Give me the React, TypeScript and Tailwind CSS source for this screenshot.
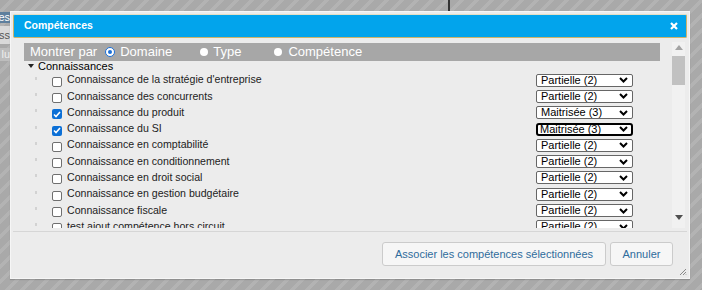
import React from "react";

type Row = { label: string; val: string; checked: boolean; focus?: boolean };

const rows: Row[] = [
  { label: "Connaissance de la stratégie d'entreprise", val: "Partielle (2)", checked: false },
  { label: "Connaissance des concurrents", val: "Partielle (2)", checked: false },
  { label: "Connaissance du produit", val: "Maitrisée (3)", checked: true },
  { label: "Connaissance du SI", val: "Maitrisée (3)", checked: true, focus: true },
  { label: "Connaissance en comptabilité", val: "Partielle (2)", checked: false },
  { label: "Connaissance en conditionnement", val: "Partielle (2)", checked: false },
  { label: "Connaissance en droit social", val: "Partielle (2)", checked: false },
  { label: "Connaissance en gestion budgétaire", val: "Partielle (2)", checked: false },
  { label: "Connaissance fiscale", val: "Partielle (2)", checked: false },
  { label: "test ajout compétence hors circuit", val: "Partielle (2)", checked: false },
];

function Chevron() {
  return (
    <svg width="9" height="6" viewBox="0 0 9 6">
      <polyline points="1,1 4.5,4.5 8,1" fill="none" stroke="#000" strokeWidth="2" />
    </svg>
  );
}

function Checkbox({ checked }: { checked: boolean }) {
  if (checked) {
    return (
      <div className="w-[10px] h-[10px] rounded-[2px] bg-[#0b6fd6] flex items-center justify-center">
        <svg width="8" height="7" viewBox="0 0 8 7">
          <polyline points="1,3.5 3,5.5 7,1" fill="none" stroke="#fff" strokeWidth="1.6" />
        </svg>
      </div>
    );
  }
  return <div className="w-[10px] h-[10px] rounded-[2px] bg-white border border-[#6f6f6f]" />;
}

export default function App() {
  return (
    <div className="relative w-[702px] h-[290px] overflow-hidden bg-[repeating-linear-gradient(135deg,#a9a9a9_0px,#a9a9a9_7px,#b3b3b3_7px,#b3b3b3_10.6px)] font-['Liberation_Sans',Arial,sans-serif]">
      {/* background page fragments */}
      <div className="absolute left-0 top-[12px] w-[10px] h-[11px] bg-[#5e7f9d] overflow-hidden flex justify-end">
        <span className="text-[11px] leading-[11px] text-white whitespace-nowrap">Classes</span>
      </div>
      <div className="absolute left-0 top-[26px] w-[10px] h-[18px] bg-[#d9d9d9] overflow-hidden flex justify-end items-center">
        <span className="text-[11px] leading-[11px] text-[#555] whitespace-nowrap">Class</span>
      </div>
      <div className="absolute left-0 top-[48px] w-[10px] h-[13px] bg-[#bdbdbd] overflow-hidden flex justify-end items-center">
        <span className="text-[11px] leading-[11px] text-[#eee] whitespace-nowrap">lu</span>
      </div>
      <div className="absolute left-[448px] top-0 w-[2px] h-[11px] bg-[#333]" />

      {/* dialog */}
      <div className="absolute left-[10px] top-[11px] w-[680px] h-[268px] bg-[#ececec] border border-[#f6f6f6] shadow-[0_1px_1px_rgba(0,0,0,0.15)] p-[2px] flex flex-col">
        {/* title bar */}
        <div className="h-[24px] bg-[#02a4ec] border border-[#cdb46a] border-t-[#e4dfc4] rounded-[2px] flex items-center justify-between pl-[10px] pr-[8px]">
          <span className="text-white text-[10.5px] font-bold">Compétences</span>
          <svg width="8" height="8" viewBox="0 0 8 8">
            <path d="M1 1 L7 7 M7 1 L1 7" stroke="#fff" strokeWidth="2.2" />
          </svg>
        </div>

        {/* body */}
        <div className="flex mt-[4px] ml-[11px] h-[186px]">
          <div className="w-[636px] overflow-hidden pt-[1px]">
            <div className="h-[18px] bg-[#a7a7a7] flex items-center text-white text-[13px] pl-[6px]">
              <span>Montrer par</span>
              <div className="ml-[8px] w-[10px] h-[10px] rounded-full border-[1.5px] border-[#1a6fd8] bg-white flex items-center justify-center">
                <div className="w-[4px] h-[4px] rounded-full bg-[#1a6fd8]" />
              </div>
              <span className="ml-[5px]">Domaine</span>
              <div className="ml-[28px] w-[8px] h-[8px] rounded-full bg-white" />
              <span className="ml-[5px]">Type</span>
              <div className="ml-[33px] w-[8px] h-[8px] rounded-full bg-white" />
              <span className="ml-[6px]">Compétence</span>
            </div>
            <div className="h-[11px] flex items-center text-[11px] text-black">
              <svg className="ml-[4px]" width="6" height="5" viewBox="0 0 6 5">
                <polygon points="0,0 6,0 3,4" fill="#222" />
              </svg>
              <span className="ml-[4px] leading-[11px]">Connaissances</span>
            </div>
            {rows.map((r, i) => (
              <div key={i} className="h-[16.3px] flex items-center text-[10.6px] text-[#222]">
                <div className="ml-[11px] w-[2px] h-[3px] bg-[#d2d2d2] -mt-[4px]" />
                <div className="ml-[15px] mt-[3px]">
                  <Checkbox checked={r.checked} />
                </div>
                <span className="ml-[5px] w-[469px] whitespace-nowrap">{r.label}</span>
                <div
                  className={
                    r.focus
                      ? "w-[97px] h-[13px] bg-white border-2 border-black rounded-[3px] flex items-center justify-between pl-[2px] pr-[3px] text-[11px] text-black"
                      : "w-[97px] h-[13px] bg-white border border-[#666] rounded-[2px] flex items-center justify-between pl-[4px] pr-[4px] text-[11px] text-black"
                  }
                >
                  <span className="leading-[11px]">{r.val}</span>
                  <Chevron />
                </div>
              </div>
            ))}
          </div>
          {/* scrollbar */}
          <div className="ml-[12px] w-[13px] flex flex-col items-center bg-[#f1f1f1]">
            <svg className="mt-[3px]" width="8" height="5" viewBox="0 0 8 5">
              <polygon points="0,5 8,5 4,0" fill="#a3a3a3" />
            </svg>
            <div className="mt-[6px] w-[13px] h-[29px] bg-[#c1c1c1]" />
            <div className="flex-1" />
            <svg className="mb-[8px]" width="8" height="5" viewBox="0 0 8 5">
              <polygon points="0,0 8,0 4,5" fill="#505050" />
            </svg>
          </div>
        </div>

        {/* footer */}
        <div className="mt-[3px] border-t border-[#d6d6d6] flex justify-end gap-[4px] pr-[14px] pt-[10px]">
          <button className="w-[224px] h-[24px] bg-[#f6f6f6] border border-[#cbcbcb] rounded-[3px] text-[11px] text-[#2f6c9c]">
            Associer les compétences sélectionnées
          </button>
          <button className="w-[63px] h-[24px] bg-[#f6f6f6] border border-[#cbcbcb] rounded-[3px] text-[11px] text-[#2f6c9c]">
            Annuler
          </button>
        </div>

        {/* resize grip */}
        <svg className="absolute right-[2px] bottom-[2px]" width="8" height="8" viewBox="0 0 8 8">
          <path d="M7 1 L1 7 M7 4 L4 7 M7 6.5 L6.5 7" stroke="#8a8a8a" strokeWidth="1" />
        </svg>
      </div>
    </div>
  );
}
